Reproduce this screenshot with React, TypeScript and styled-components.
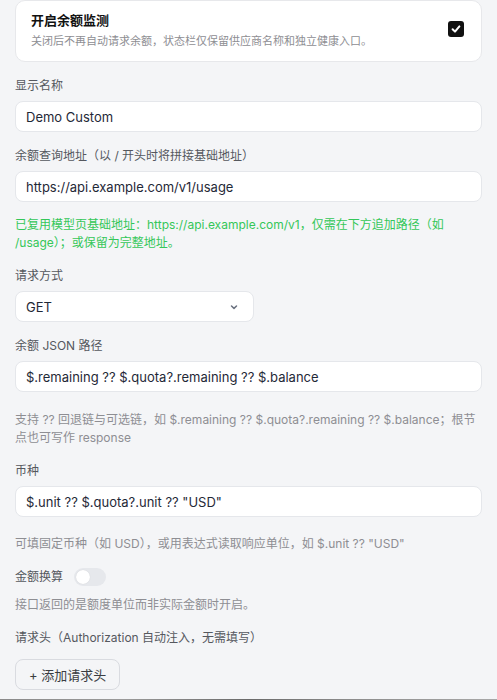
import { createGlobalStyle } from "styled-components";
import styled from "styled-components";

const GlobalStyle = createGlobalStyle`
  * {
    box-sizing: border-box;
  }

  body {
    margin: 0;
    background: #f4f5f7;
    font-family: "Inter", "Noto Sans CJK SC", sans-serif;
    color: #1f2937;
  }
`;

export default function App() {
  return (
    <>
      <GlobalStyle />
      <Page>
        <Card>
          <CardText>
            <CardTitle>开启余额监测</CardTitle>
            <CardDesc>关闭后不再自动请求余额，状态栏仅保留供应商名称和独立健康入口。</CardDesc>
          </CardText>
          <Check>
            <svg width="10" height="10" viewBox="0 0 10 10">
              <path d="M1.6 5.2 L4 7.6 L8.4 2.4" stroke="white" strokeWidth="2" fill="none" strokeLinecap="round" strokeLinejoin="round" />
            </svg>
          </Check>
        </Card>

        <Field>
          <Label>显示名称</Label>
          <Input>Demo Custom</Input>
        </Field>

        <Field>
          <Label>余额查询地址（以 / 开头时将拼接基础地址）</Label>
          <Input>https://api.example.com/v1/usage</Input>
          <Hint $tone="green" $gap={8}>
            已复用模型页基础地址：https://api.example.com/v1，仅需在下方追加路径（如 /usage）；或保留为完整地址。
          </Hint>
        </Field>

        <Field>
          <Label>请求方式</Label>
          <Select>
            GET
            <svg width="10" height="10" viewBox="0 0 10 10">
              <path d="M2.5 4 L5 6.4 L7.5 4" stroke="#6b7280" strokeWidth="1.5" fill="none" strokeLinecap="round" strokeLinejoin="round" />
            </svg>
          </Select>
        </Field>

        <Field>
          <Label>余额 JSON 路径</Label>
          <Input>$.remaining ?? $.quota?.remaining ?? $.balance</Input>
          <Hint $gap={13}>
            支持 ?? 回退链与可选链，如 $.remaining ?? $.quota?.remaining ?? $.balance；根节点也可写作 response
          </Hint>
        </Field>

        <Field>
          <Label>币种</Label>
          <Input>$.unit ?? $.quota?.unit ?? "USD"</Input>
          <Hint $gap={12}>可填固定币种（如 USD），或用表达式读取响应单位，如 $.unit ?? "USD"</Hint>
        </Field>

        <Field>
          <ToggleRow>
            <Label>金额换算</Label>
            <Toggle>
              <Knob />
            </Toggle>
          </ToggleRow>
          <Hint $gap={4}>接口返回的是额度单位而非实际金额时开启。</Hint>
        </Field>

        <Field>
          <Label>请求头（Authorization 自动注入，无需填写）</Label>
          <AddButton $top={6}>+ 添加请求头</AddButton>
        </Field>
      </Page>
      <Backdrop />
    </>
  );
}

const Page = styled.div`
  & {
    display: flex;
    flex-direction: column;
    gap: 15px;
    padding: 0 15px 9px;
  }
`;

const Card = styled.div`
  & {
    display: flex;
    align-items: center;
    justify-content: space-between;
    background: #ffffff;
    border: 1px solid #e7e8eb;
    border-radius: 10px;
    padding: 8px 17px 12px 15px;
    height: 62px;
  }
`;

const CardText = styled.div`
  & {
    display: flex;
    flex-direction: column;
    gap: 3px;
  }
`;

const CardTitle = styled.div`
  & {
    font-size: 13px;
    font-weight: 700;
    line-height: 20px;
    color: #111111;
  }
`;

const CardDesc = styled.div`
  & {
    font-size: 11px;
    line-height: 16px;
    color: #8e8e93;
  }
`;

const Check = styled.div`
  & {
    width: 16px;
    height: 16px;
    border-radius: 3px;
    background: #111111;
    display: flex;
    align-items: center;
    justify-content: center;
  }
`;

const Field = styled.div`
  & {
    display: flex;
    flex-direction: column;
    gap: 6px;
  }
`;

const Label = styled.div`
  & {
    font-size: 12px;
    line-height: 18px;
    color: #55585e;
  }
`;

const Input = styled.div`
  & {
    height: 31px;
    display: flex;
    align-items: center;
    padding: 0 10px;
    background: #ffffff;
    border: 1px solid #e5e7eb;
    border-radius: 8px;
    font-size: 13px;
    color: #1f2937;
    white-space: nowrap;
  }
`;

const Select = styled(Input)`
  & {
    width: 239px;
    justify-content: space-between;
    padding-right: 14px;
  }
`;

const Hint = styled.div<{ $tone?: "green" | "gray"; $gap: number }>`
  & {
    margin-top: ${(p) => p.$gap}px;
    font-size: 12px;
    line-height: 18px;
    color: ${(p) => (p.$tone === "green" ? "#34c759" : "#8e8e93")};
  }
`;

const ToggleRow = styled.div`
  & {
    display: flex;
    align-items: center;
    gap: 11px;
  }
`;

const Toggle = styled.div`
  & {
    width: 32px;
    height: 18px;
    border-radius: 9px;
    background: #e6e8ec;
    padding: 2px;
    display: flex;
    align-items: center;
  }
`;

const Knob = styled.div`
  & {
    width: 14px;
    height: 14px;
    border-radius: 50%;
    background: #ffffff;
    box-shadow: 0 0 1px rgba(0, 0, 0, 0.15);
  }
`;

const AddButton = styled.div<{ $top: number }>`
  & {
    margin-top: ${(p) => p.$top}px;
    width: fit-content;
    height: 31px;
    display: flex;
    align-items: center;
    padding: 0 13px;
    border: 1px solid #d9dbe0;
    border-radius: 8px;
    font-size: 13px;
    color: #3a3d42;
  }
`;

const Backdrop = styled.div`
  & {
    height: 4px;
    background: linear-gradient(90deg, #8a8a8a 0%, #9a9a9a 25%, #6a6a6a 50%, #8c8c8c 70%, #a8a8a8 100%);
  }
`;
